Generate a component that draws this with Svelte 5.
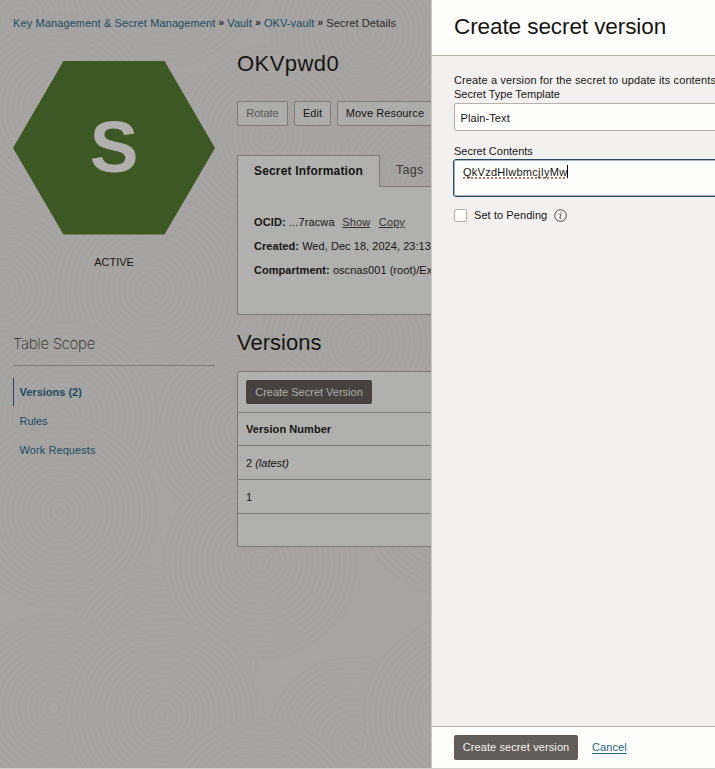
<script>
  const swirls = [
    [20, 20, 92], [165, -30, 98], [367, 33, 98], [60, 110, 98], [160, 165, 96], [268, 137, 92], [430, 190, 98],
    [0, 290, 98], [150, 290, 98], [357, 343, 98], [245, 430, 98], [63, 417, 96],
    [455, 500, 98], [60, 512, 98], [160, 660, 98], [353, 743, 88], [260, 562, 98], [53, 708, 95], [162, 715, 98],
    [260, 815, 98], [460, 715, 98]
  ];
  const rings = (r) => Array.from({ length: Math.floor(r / 5.4) }, (_, i) => r - 2 - i * 5.4);
  const rows = ['1', ''];
</script>

<div class="page">
  <main>
    <svg class="texture" width="431" height="768" aria-hidden="true">
      {#each swirls as [x, y, r]}
        <circle cx={x} cy={y} {r} fill="#a6a5a3" />
        {#each rings(r) as q}
          <circle cx={x} cy={y} r={q} fill="none" stroke="#a19f9e" stroke-opacity=".42" stroke-width="2.4" />
        {/each}
      {/each}
    </svg>
    <nav class="crumbs">
      <a>Key Management &amp; Secret Management</a><i>»</i><a>Vault</a><i>»</i><a>OKV-vault</a><i>»</i><span>Secret Details</span>
    </nav>
    <div class="columns">
      <aside>
        <svg class="hex" width="202" height="174" viewBox="0 0 202 174">
          <path d="M50.5 0H151.5L202 87L151.5 173.5H50.5L0 87Z" fill="#3e5823" />
          <text x="101" y="111" text-anchor="middle">S</text>
        </svg>
        <div class="state">ACTIVE</div>
        <h3>Table Scope</h3>
        <ul>
          <li class="active"><a>Versions (2)</a></li>
          <li><a>Rules</a></li>
          <li><a class="work">Work Requests</a></li>
        </ul>
      </aside>
      <section class="detail">
        <h1>OKVpwd0</h1>
        <div class="actions">
          <button class="rotate" disabled>Rotate</button>
          <button class="edit">Edit</button>
          <button class="move">Move Resource</button>
        </div>
        <div class="tabs">
          <div class="tab on"><span>Secret Information</span></div>
          <div class="tab off"><span>Tags</span></div>
        </div>
        <div class="info">
          <p><b>OCID:</b> ...7racwa <u class="show">Show</u><u>Copy</u></p>
          <p class="created"><b>Created:</b> Wed, Dec 18, 2024, 23:13</p>
          <p class="comp"><b>Compartment:</b> oscnas001 (root)/Ex</p>
        </div>
        <h2>Versions</h2>
        <div class="table">
          <div class="toolbar"><button class="dark">Create Secret Version</button></div>
          <div class="row head"><span>Version Number</span></div>
          <div class="row">2&nbsp;<em>(latest)</em></div>
          {#each rows as r}<div class="row">{r}</div>{/each}
        </div>
      </section>
    </div>
  </main>

  <div class="drawer">
    <header><span>Create secret version</span></header>
    <div class="body">
      <p class="intro">Create a version for the secret to update its contents</p>
      <div class="label">Secret Type Template</div>
      <div class="select"><span>Plain-Text</span></div>
      <div class="label contents">Secret Contents</div>
      <div class="area"><span class="typed">QkVzdHlwbmcjIyMw</span><span class="caret"></span></div>
      <div class="check">
        <span class="box"></span><span class="pending">Set to Pending</span>
        <svg width="13" height="13" viewBox="0 0 13 13">
          <circle cx="6.5" cy="6.5" r="5.8" fill="none" stroke="#4a4643" stroke-width="1" />
          <path d="M5.3 5.5H6.8L5.8 9.3Q5.8 9.8 7.2 9.2" fill="none" stroke="#4a4643" stroke-width=".9" />
          <circle cx="7.1" cy="3.6" r=".7" fill="#4a4643" />
        </svg>
      </div>
    </div>
    <footer><button class="create">Create secret version</button><a class="cancel">Cancel</a></footer>
  </div>
</div>

<style>
  :global(body) { margin: 0; overflow: hidden; }
  .page {
    display: flex; box-sizing: border-box; width: 715px; height: 769px; overflow: hidden;
    border-bottom: 1px solid #cfcecc;
    font: 11px/14px "Liberation Sans", Arial, sans-serif; color: #161513;
  }
  .page * { box-sizing: border-box; }
  h1, h2, h3, p, ul { margin: 0; padding: 0; font-weight: 400; }
  button { font: inherit; color: inherit; padding: 0; margin: 0; white-space: nowrap; }
  main { position: relative; width: 431px; flex: none; overflow: hidden; background: #a6a5a3; }
  .texture { position: absolute; left: 0; top: 0; }
  .crumbs, .columns { position: relative; }
  .crumbs { display: flex; height: 61px; padding: 16px 0 0 13px; white-space: nowrap; color: #2c2a28; letter-spacing: .11px; }
  .crumbs a, aside a { color: #1b4a63; }
  .crumbs i { font-style: normal; font-weight: 700; font-size: 10px; width: 11.8px; text-align: center; }
  .columns { display: flex; padding-left: 13px; gap: 22px; }
  aside { width: 202px; flex: none; }
  .hex { display: block; }
  .hex text { font-size: 73px; font-weight: 700; fill: #b1b0ae; }
  .state { text-align: center; padding-top: 20px; height: 96px; }
  h3 { height: 35px; border-bottom: 1px solid #7c7a77; font-family: Inter, "Liberation Sans", sans-serif; font-size: 15px; font-weight: 200; letter-spacing: -.3px; line-height: 26px; color: #262422; }
  ul { list-style: none; padding-top: 12px; }
  li { height: 29px; padding: 7px 0 0 5.5px; border-left: 1px solid transparent; }
  li.active { font-weight: 700; border-color: #1b4a63; height: 28px; margin-bottom: 1px; }
  .work { letter-spacing: .08px; }
  .detail { width: 600px; flex: none; margin-top: -11px; }
  h1 { font-size: 22px; line-height: 28px; height: 51px; letter-spacing: .45px; }
  .actions { display: flex; gap: 6px; height: 54px; }
  .actions button { height: 25px; border: 1px solid #7c7a77; border-radius: 2px; background: #acacaa; padding-bottom: 1px; }
  .actions .rotate { width: 51px; color: #585653; }
  .actions .edit { width: 37px; }
  .actions .move { width: 96px; letter-spacing: .1px; }
  .tabs { display: flex; height: 32px; }
  .tab.on { width: 143px; border: 1px solid #7c7a77; border-bottom: 0; background: #b0b0ae; padding: 8px 0 0 16px; font-weight: 700; font-size: 12px; letter-spacing: .17px; }
  .tab.off { flex: 1; border-bottom: 1px solid #7c7a77; padding: 8px 0 0 16px; font-size: 12.5px; color: #393735; letter-spacing: .3px; }
  .info { height: 128px; border: 1px solid #7c7a77; border-top: 0; background: #b0b0ae; padding: 28px 0 0 16px; white-space: nowrap; letter-spacing: .12px; }
  .info p { height: 24px; }
  .info .created { letter-spacing: .05px; }
  .info .comp { letter-spacing: .05px; }
  .info u { color: #353330; margin-right: 8.5px; text-underline-offset: 1px; }
  .info .show { margin-left: 4.5px; }
  h2 { font-size: 22px; line-height: 26px; padding-top: 15px; height: 56px; }
  .table { height: 176px; border: 1px solid #7c7a77; border-radius: 2px; background: #b0b0ae; }
  .toolbar { height: 40px; padding: 8px; }
  .dark { display: block; width: 126px; height: 24px; border: 0; border-radius: 2px; background: #464240; color: #b0afad; }
  .row { height: 34px; border-top: 1px solid #7c7a77; padding: 10px 8px 0; }
  .head { height: 33px; font-weight: 700; padding-top: 9px; letter-spacing: .06px; }
  .drawer { display: flex; flex-direction: column; width: 284px; flex: none; border-left: 1px solid #cbc9c6; background: #f3f1f0; white-space: nowrap; overflow: hidden; }
  header { height: 56px; flex: none; background: #fdfdfc; border-bottom: 1px solid #b4b0ac; padding: 13px 0 0 22px; font-size: 22.5px; line-height: 28px; letter-spacing: -.08px; }
  .body { flex: 1; padding: 17px 0 0 22px; width: 400px; }
  .intro { letter-spacing: .12px; }
  .select { height: 28px; margin-top: 2px; border: 1px solid #b4b0ac; border-radius: 2px; background: #fdfdfc; padding: 7px 5.5px; letter-spacing: .1px; }
  .contents { margin-top: 13px; }
  .area { display: flex; height: 38px; margin-top: 1px; margin-left: -1px; border: 1px solid #224a62; box-shadow: inset 0 0 0 1px #a9b4bb; border-radius: 3px; background: #fdfdfc; padding: 5px 9px; }
  .typed { height: 14px; letter-spacing: .26px; text-decoration: underline dotted #df6b60 1.5px; text-underline-offset: 1px; text-decoration-skip-ink: none; }
  .caret { width: 1px; height: 13px; background: #000; }
  .check { display: flex; align-items: center; height: 14px; margin-top: 11px; }
  .pending { letter-spacing: .08px; }
  .box { width: 13px; height: 13px; border: 1px solid #b4b0ac; border-radius: 2px; background: #fdfdfc; margin-right: 7px; }
  .check svg { margin: 1px 0 0 7px; }
  footer { display: flex; align-items: center; height: 42px; flex: none; border-top: 1px solid #b4b0ac; background: #fdfdfc; padding-left: 22px; }
  .create { width: 124px; height: 25px; border: 0; border-radius: 2px; background: #625d59; color: #f3f1f0; padding-bottom: 1px; letter-spacing: .1px; }
  .cancel { margin: -1px 0 0 14px; color: #1f6788; text-decoration: underline; text-underline-offset: 2px; letter-spacing: .1px; }
</style>
